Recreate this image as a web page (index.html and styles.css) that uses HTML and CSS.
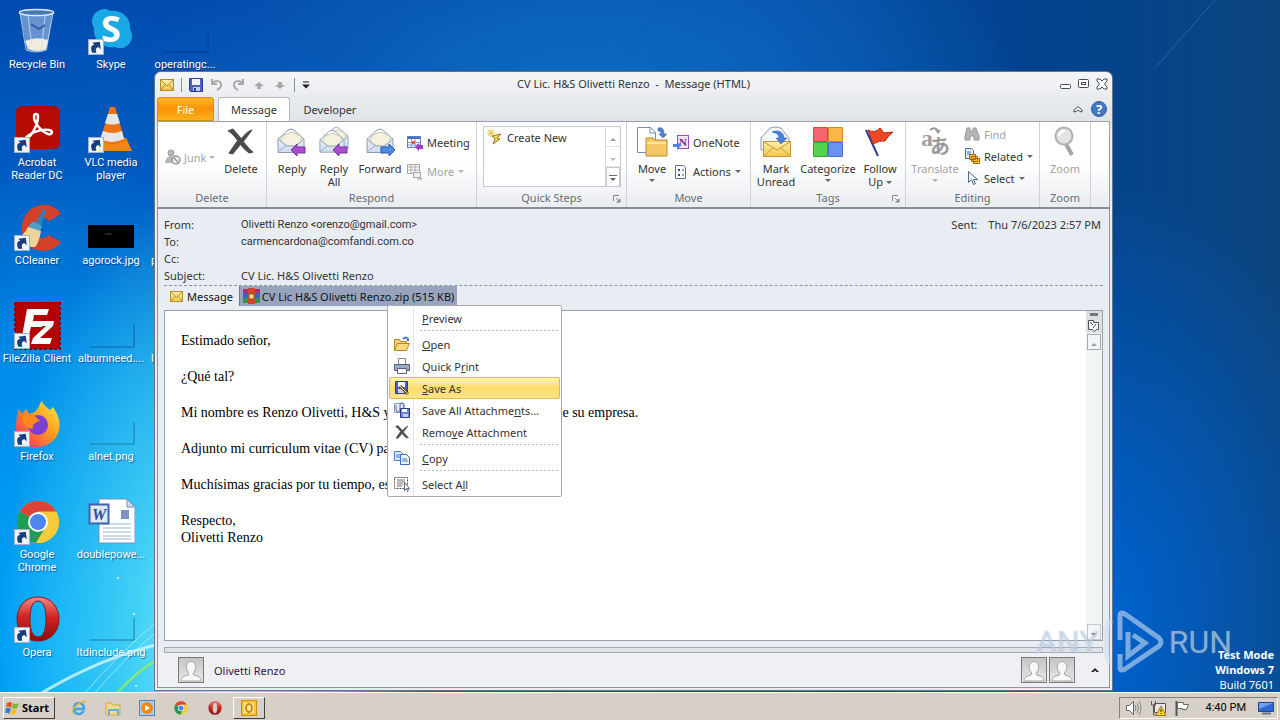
FILE: index.html
```
<!DOCTYPE html>
<html lang="en">
<head>
    <meta charset="UTF-8">
    <meta name="viewport" content="width=device-width, initial-scale=1.0">
    <title>CV Lic. H&amp;S Olivetti Renzo - Message (HTML)</title>
    <link rel="stylesheet" href="styles.css">
</head>
<body>
    <!-- shared icons -->
    <svg class="defs" width="0" height="0">
        <defs>
            <linearGradient id="g-opera" x1="0" y1="0" x2="0" y2="1"><stop offset="0" stop-color="#f58a80"/><stop offset=".45" stop-color="#cf2424"/><stop offset="1" stop-color="#8d0c0c"/></linearGradient>
            <linearGradient id="g-gold" x1="0" y1="0" x2="0" y2="1"><stop offset="0" stop-color="#fff0a8"/><stop offset="1" stop-color="#f3c548"/></linearGradient>
            <linearGradient id="g-env" x1="0" y1="0" x2="0" y2="1"><stop offset="0" stop-color="#ffffff"/><stop offset="1" stop-color="#cddcf0"/></linearGradient>
            <linearGradient id="g-person" x1="0" y1="0" x2="0" y2="1"><stop offset="0" stop-color="#c4c4c4"/><stop offset="1" stop-color="#e9e9e9"/></linearGradient>
            <linearGradient id="g-fox" x1="1" y1="0" x2="0" y2="1"><stop offset="0" stop-color="#fff24a"/><stop offset=".45" stop-color="#ff9a1f"/><stop offset="1" stop-color="#f5246b"/></linearGradient>
        </defs>
        <symbol id="shortcut" viewBox="0 0 15 15">
            <rect x=".5" y=".5" width="14" height="14" fill="#f3f6fa" stroke="#9fb4cc"/>
            <path d="M4 13C2 8 3 6 6 5.500L4 3.500l7-1 1 7-2.500-2C7 8.500 7 10.500 8 13z" fill="#173f80"/>
        </symbol>
        <symbol id="person" viewBox="0 0 26 26">
            <rect x=".5" y=".5" width="25" height="25" fill="url(#g-person)" stroke="#777"/>
            <path d="M3 24c0-4 3-5 6-5.500 2-.5 2-2 1-3.500-1.500-2-2-4-1.500-6.500C9 5.500 11 4.500 13 4.500s4 1 4.500 4c.5 2.500 0 4.500-1.500 6.500-1 1.500-1 3 1 3.500 3 .5 6 1.500 6 5.500z" fill="#f8f8f8" stroke="#a5a5a5"/>
        </symbol>
        <symbol id="mail" viewBox="0 0 14 12">
            <rect x=".5" y=".5" width="13" height="11" fill="url(#g-gold)" stroke="#b58b24"/>
            <path d="M1 1l6 6 6-6M1 11l4-5M13 11L9 6" fill="none" stroke="#b58b24"/>
        </symbol>
        <symbol id="open-env" viewBox="0 0 28 26">
            <path d="M1 11L11 2q3-2 6 0l10 9v13.500H1z" fill="url(#g-env)" stroke="#8a9cb5"/>
            <path d="M4 11l3-4 8-3 9 4v6l-6 4h-8l-6-4z" fill="#f4f1df" stroke="#c9c4a5"/>
            <path d="M1 11l9 7h8l9-7M1 24l9-7M27 24l-9-7" fill="none" stroke="#9aabc2"/>
        </symbol>
        <symbol id="cross" viewBox="0 0 28 28">
            <path d="M1 3l5-2c4 4 6 7 9 10 3-4 7-8 11-9l-9 12c3 4 6 8 10 11l-4 1c-4-3-7-6-9-9-3 4-6 7-8 10l-4-1c3-4 6-9 9-13C8 9 5 5 1 3z" fill="#4b4b4b" stroke="#4b4b4b"/>
        </symbol>
        <symbol id="chrome" viewBox="0 0 44 44">
            <circle cx="22" cy="22" r="21" fill="#f9cb3a"/>
            <path d="M22 22L3.800 11.500A21 21 0 0 1 40.200 11.500H22z" fill="#db4437"/>
            <path d="M22 22L3.800 11.500A21 21 0 0 0 20 43L29 28z" fill="#1e9c57"/>
            <path d="M22 12h18.500A21 21 0 0 1 20 43L30 27z" fill="#f9cb3a"/>
            <circle cx="22" cy="22" r="10" fill="#fff"/><circle cx="22" cy="22" r="8" fill="#4c86ee"/>
        </symbol>
        <symbol id="opera" viewBox="0 0 44 46">
            <path fill-rule="evenodd" d="M22 1C9 1 1 11 1 23s8 22 21 22 21-10 21-22S35 1 22 1zm0 4c6 0 8 8 8 18s-2 18-8 18-8-8-8-18 2-18 8-18z" fill="url(#g-opera)" stroke="#8e1616"/>
        </symbol>
    </svg>

    <main class="desktop">
        <svg class="rays" viewBox="0 0 160 200" aria-hidden="true">
            <path d="M40 202Q100 166 160 152" stroke="#d5f5ff" stroke-width="3" fill="none" opacity=".8"/>
            <path d="M84 202Q120 160 160 127M94 202Q125 165 160 137" stroke="#b8f0ff" fill="none" opacity=".7"/>
            <path d="M116 202Q138 178 160 166" stroke="#8ee86a" stroke-width="2" fill="none"/>
            <g fill="#dffaff"><circle cx="118" cy="86" r="1"/><circle cx="134" cy="122" r="1"/><circle cx="136" cy="194" r="1"/></g>
        </svg>
        <svg class="beam" viewBox="0 0 200 90" aria-hidden="true">
            <path d="M135 0L75 68" stroke="#3f78b5" opacity=".6"/>
        </svg>

        <div class="icons">
            <a class="icon" href="#">
                <svg viewBox="0 0 48 48"><path d="M7 4h33l-6 38q-9 4-20 0z" fill="#9db9dc" opacity=".65"/><path d="M12 33q11-5 23-1l-2 9q-8 4-18 0z" fill="#f0ece0"/><ellipse cx="23.500" cy="4.500" rx="17" ry="3" fill="#4777b5" stroke="#dbe8f5" stroke-width="1.500"/><path d="M7 5l6 37q9 4 20 0l7-37M15 8l4 30M32 8l-3 30" fill="none" stroke="#d0e0f2" opacity=".8"/><path d="M18 16l8 5 6-4" stroke="#2e5fae" stroke-width="2" fill="none"/></svg>
                <span>Recycle Bin</span>
            </a>
            <a class="icon" href="#">
                <svg viewBox="0 0 48 48"><path d="M13 2c4-2 8-1 10 1 12-2 21 7 20 18 3 5 3 12-2 16-4 4-9 4-13 2C17 41 6 33 7 20 3 14 5 5 13 2z" fill="#1ba9e6"/><text x="24" y="34" class="skype-s">S</text><use href="#shortcut" x="1" y="31" width="16" height="16"/></svg>
                <span>Skype</span>
            </a>
            <a class="icon" href="#">
                <svg viewBox="0 0 48 48"><path d="M3 44h44V22" fill="none" stroke="#0a3b8c"/></svg>
                <span>operatingc...</span>
            </a>

            <a class="icon" href="#">
                <svg viewBox="0 0 48 48"><rect x="3" y="0" width="44" height="43" rx="6" fill="#b30b00"/><path d="M12 33c4-6 15-10 24-9 5 1 3 5-1 4-6-2-14-11-14-17 0-4 4-4 4 0 0 6-5 17-10 21-2 2-4 2-3 1z" fill="none" stroke="#fff" stroke-width="2.500"/><use href="#shortcut" x="1" y="31" width="16" height="16"/></svg>
                <span>Acrobat<br>Reader DC</span>
            </a>
            <a class="icon" href="#">
                <svg viewBox="0 0 48 48"><path d="M11 32h28l6 13H7z" fill="#f28a12"/><path d="M23 1h5l10 34q-13 7-25 0z" fill="#ee7411"/><path d="M21 8h9l3 9q-8 3-15 0zM16 25q10 4 19 0l2 8q-12 6-24 0z" fill="#e6e6e6"/><use href="#shortcut" x="1" y="31" width="16" height="16"/></svg>
                <span>VLC media<br>player</span>
            </a>
            <i></i>

            <a class="icon" href="#">
                <svg viewBox="0 0 48 48"><path d="M48 10C40-3 22-1 14 9c-9 12-6 30 7 36 9 4 20 2 27-7l-12-7c-4 4-10 4-13 0-4-5-2-13 3-16 4-2 8-1 10 2z" fill="#d5402b"/><path d="M30 5l3 1-5 18-7-2z" fill="#2f7fb8"/><path d="M19 18q6 0 10 5l-2 4-12-4z" fill="#4ba0d0"/><path d="M15 23l13 4q-2 12-6 16Q8 44 2 35q9-3 13-12z" fill="#f0d29b"/><use href="#shortcut" x="1" y="31" width="16" height="16"/></svg>
                <span>CCleaner</span>
            </a>
            <a class="icon" href="#">
                <svg viewBox="0 0 48 48"><path d="M1 21h46v23H1z" fill="#000"/><path d="M18 30h7" stroke="#444"/></svg>
                <span>agorock.jpg</span>
            </a>
            <a class="icon clipped" href="#"><svg viewBox="0 0 48 48"></svg><span>p</span></a>

            <a class="icon" href="#">
                <svg viewBox="0 0 48 48"><path d="M2 0h45v47H2z" fill="#b30000" stroke="#7c0000" stroke-width="2" stroke-dasharray="3 2"/><path d="M14 7h22l-2 6H21l-1 6h11l-2 6H18l-4 15H8zM24 19h17l-1 5-13 12h12l-2 6H18l2-6 13-12h-10z" fill="#fff"/><use href="#shortcut" x="1" y="31" width="16" height="16"/></svg>
                <span>FileZilla Client</span>
            </a>
            <a class="icon" href="#">
                <svg viewBox="0 0 48 48"><path d="M3 45h44V22" fill="none" stroke="#0f62a5"/></svg>
                <span>albumneed....</span>
            </a>
            <a class="icon clipped" href="#"><svg viewBox="0 0 48 48"></svg><span>l</span></a>

            <a class="icon" href="#">
                <svg viewBox="0 0 48 48"><path d="M29 0c0 5 5 7 8 10l3-3c5 7 8 15 6 23-2 10-11 17-22 17S3 39 3 27c0-7 1-13 3-18l3 5 4-5 3 5c5-1 8-3 9-6z" fill="url(#g-fox)"/><circle cx="25" cy="25" r="10" fill="#7b3fd3"/><path d="M9 16l12-1 6 6c-5 1-8 4-7 8-7-1-11-6-11-13z" fill="#ff8a1a"/><use href="#shortcut" x="1" y="31" width="16" height="16"/></svg>
                <span>Firefox</span>
            </a>
            <a class="icon" href="#">
                <svg viewBox="0 0 48 48"><path d="M3 44h44V22" fill="none" stroke="#1c7f9e"/></svg>
                <span>alnet.png</span>
            </a>
            <i></i>

            <a class="icon" href="#">
                <svg viewBox="0 0 48 48"><use href="#chrome" x="3" y="2" width="44" height="44"/><use href="#shortcut" x="1" y="31" width="16" height="16"/></svg>
                <span>Google<br>Chrome</span>
            </a>
            <a class="icon" href="#">
                <svg viewBox="0 0 48 48"><path d="M12 1h28l8 8v36H12z" fill="#fff" stroke="#6f8fbf"/><path d="M40 1v8h8z" fill="#cfdcf0" stroke="#6f8fbf"/><path d="M16 26h28M16 30h28M16 34h28M16 38h28M16 41h28" stroke="#9db2d8"/><path d="M34 12h8v9h-8z" fill="#7e93c4"/><rect x="2.500" y="6.500" width="19" height="19" fill="#dce8f8" stroke="#3f62a8" stroke-width="2"/><text x="12" y="22" class="word-w">W</text></svg>
                <span>doublepowe...</span>
            </a>
            <i></i>

            <a class="icon" href="#">
                <svg viewBox="0 0 48 48"><use href="#opera" x="3" y="0" width="44" height="46"/><use href="#shortcut" x="1" y="31" width="16" height="16"/></svg>
                <span>Opera</span>
            </a>
            <a class="icon" href="#">
                <svg viewBox="0 0 48 48"><path d="M3 44h44V22" fill="none" stroke="#1c7f9e"/></svg>
                <span>ltdinclude.png</span>
            </a>
        </div>

        <section class="window">
            <header class="titlebar">
                <div class="quick-access">
                    <svg width="14" height="12"><use href="#mail"/></svg>
                    <i class="divider"></i>
                    <button aria-label="Save"><svg width="14" height="14"><path d="M.5.500h13v13h-12l-1-1z" fill="#4d62c4" stroke="#2c3a8c"/><path d="M3 1h8v6H3z" fill="#f1f4fb"/><path d="M4 9h7v4H4z" fill="#c6d0ee"/><path d="M5 10h2v3H5z" fill="#2c3a8c"/></svg></button>
                    <button aria-label="Undo"><svg width="14" height="14"><path d="M2 1v5h5M2 6c3-4 9-4 9 1 0 3-2 4-4 5" fill="none" stroke="#a9a9a9" stroke-width="2"/></svg></button>
                    <button aria-label="Redo"><svg width="14" height="14"><path d="M12 1v5H7M12 6C9 2 3 2 3 7c0 3 2 4 4 5" fill="none" stroke="#a9a9a9" stroke-width="2"/></svg></button>
                    <button aria-label="Previous item"><svg width="14" height="14"><path d="M7 4l5 4H9v3H5V8H2z" fill="#a9a9a9"/></svg></button>
                    <button aria-label="Next item"><svg width="14" height="14"><path d="M7 11l5-4H9V4H5v3H2z" fill="#a9a9a9"/></svg></button>
                    <i class="divider"></i>
                    <button aria-label="Customize"><svg width="8" height="8"><path d="M1 1h6" stroke="#222"/><path d="M0 3.500h8L4 7.500z" fill="#222"/></svg></button>
                </div>
                <h1>CV Lic. H&amp;S Olivetti Renzo&nbsp; -&nbsp; Message (HTML)</h1>
                <div class="controls">
                    <button aria-label="Minimize"><svg width="12" height="12"><rect x=".5" y="6.500" width="10" height="4" rx="1" fill="#fff" stroke="#444b55"/></svg></button>
                    <button aria-label="Restore"><svg width="12" height="12"><rect x=".5" y="1.500" width="10" height="8" rx="1" fill="#fff" stroke="#444b55"/><rect x="3.500" y="4.500" width="4" height="2" fill="none" stroke="#444b55"/></svg></button>
                    <button aria-label="Close"><svg width="12" height="12"><path d="M1 1h3l2 2 2-2h3v2L8.500 6 11 9v2H8L6 9l-2 2H1V9l2.500-3L1 3z" fill="#fff" stroke="#444b55"/></svg></button>
                </div>
            </header>

            <nav class="tabs">
                <button class="tab file">File</button>
                <button class="tab active">Message</button>
                <button class="tab">Developer</button>
                <div class="help">
                    <button aria-label="Minimize the ribbon"><svg width="10" height="8"><path d="M5 1.500L9 5v2L7 6.500 5 5 3 6.500 1 7V5z" fill="#fff" stroke="#444b55"/></svg></button>
                    <button aria-label="Help"><svg width="16" height="16"><circle cx="8" cy="8" r="7.500" fill="#4478cc" stroke="#2f5ba5"/><text x="8" y="12.500" class="help-mark">?</text></svg></button>
                </div>
            </nav>

            <div class="ribbon">
                <div class="group">
                    <div class="tools">
                        <div class="stack">
                            <button class="small junk disabled"><svg width="16" height="16"><circle cx="6" cy="4" r="3" fill="#bbb" stroke="#999"/><path d="M0 14q1-7 6-7 4 1 4 7z" fill="#b5b5b5"/><circle cx="11" cy="11" r="4" fill="#eee" stroke="#999" stroke-width="1.500"/><path d="M8.500 8.500l5 5" stroke="#999" stroke-width="1.500"/></svg>Junk<b class="caret"></b></button>
                        </div>
                        <button class="big"><svg viewBox="0 0 32 32"><use href="#cross" x="1" y="2" width="29" height="27"/></svg>Delete</button>
                    </div>
                    <div class="group-name">Delete</div>
                </div>
                <div class="group respond">
                    <div class="tools">
                        <button class="big"><svg viewBox="0 0 32 32"><use href="#open-env" x="1" y="2" width="28" height="26"/><path d="M15 24l6-6v3h8v6h-8v3z" fill="#a94fce" stroke="#7c2da0"/></svg>Reply</button>
                        <button class="big"><svg viewBox="0 0 32 32"><use href="#open-env" x="6" y="0" width="25" height="24"/><use href="#open-env" x="1" y="3" width="26" height="25"/><path d="M15 24l6-6v3h8v6h-8v3z" fill="#a94fce" stroke="#7c2da0"/></svg>Reply<br>All</button>
                        <button class="big mid"><svg viewBox="0 0 32 32"><use href="#open-env" x="2" y="2" width="28" height="26"/><path d="M31 24l-6-6v3h-8v6h8v3z" fill="#4f8de0" stroke="#2459b0"/></svg>Forward</button>
                        <div class="stack">
                            <button class="small"><svg width="16" height="16"><rect x=".5" y="1.500" width="13" height="11" fill="#fff" stroke="#5f7fc0"/><path d="M1 3h12" stroke="#4a6cc0" stroke-width="2"/><path d="M1 7.500h12M1 10h12M4.500 4v8M8 4v8" stroke="#7f9ad4"/><path d="M5 6h3v3H5z" fill="#e05a3a"/><path d="M8 12l4-4v2h4v4h-4v2z" fill="#a03fc4"/></svg>Meeting</button>
                            <button class="small disabled"><svg width="16" height="16"><path d="M.5.500h12v9H.5zM1 3h11M1 6h11M4 1v8M8 1v8" fill="none" stroke="#aaa"/><rect x="6.500" y="8.500" width="7" height="5" fill="#eee" stroke="#aaa"/><path d="M10 15h5M13 13l2 2" stroke="#999"/></svg>More<b class="caret"></b></button>
                        </div>
                    </div>
                    <div class="group-name">Respond</div>
                </div>
                <div class="group quick-steps">
                    <div class="tools">
                        <div class="gallery">
                            <button class="small"><svg width="16" height="16"><path d="M4 0v8M0 4h8M1 1l6 6M7 1L1 7" stroke="#e8c33a"/><path d="M5 7l9-2-4 4 3 1-7 5 2-5z" fill="#f5d04e" stroke="#9a7b2a"/></svg>Create New</button>
                            <div class="spinner">
                                <button aria-label="Up"><b class="up"></b></button>
                                <button aria-label="Down"><b class="caret"></b></button>
                                <button aria-label="More steps"><b class="caret lined"></b></button>
                            </div>
                        </div>
                    </div>
                    <div class="group-name">Quick Steps<svg class="launcher" width="8" height="8"><path d="M.5 6V.500H6M3 3l3 3" fill="none" stroke="#888"/><path d="M7.500 3v4.500H3z" fill="#888"/></svg></div>
                </div>
                <div class="group move">
                    <div class="tools">
                        <button class="big"><svg viewBox="0 0 32 32"><path d="M1.500 1.500h13l5 5v20h-18z" fill="#fff" stroke="#7a8fb5"/><path d="M14 1v6h6" fill="none" stroke="#7a8fb5"/><path d="M22 2c5-1 6 2 6 6h3l-4 4-4-4h2c0-2-1-3-3-3z" fill="#4f83d4" stroke="#2b5ba8" stroke-width=".5"/><path d="M10 12h7l2 2h12v16H10z" fill="#f5c765" stroke="#bd8a2d"/><path d="M11 17h19" stroke="#ffe5a6" stroke-width="2"/></svg>Move<b class="caret"></b></button>
                        <div class="stack">
                            <button class="small"><svg width="16" height="16"><rect x="4.500" y=".5" width="11" height="13" fill="#f6e6f8" stroke="#9b4fa8"/><text x="10" y="11" class="onenote">N</text><path d="M0 9h4V6l4 4.500L4 15v-3H0z" fill="#4b84d8"/></svg>OneNote</button>
                            <button class="small"><svg width="16" height="16"><path d="M2.500 1.500h8l2 2v11h-10z" fill="#fff" stroke="#5b6f96"/><path d="M5 5h2v2H5zM5 10h2v2H5z" fill="#2f4a80"/><path d="M9 6h2M9 11h2" stroke="#2f4a80"/></svg>Actions<b class="caret"></b></button>
                        </div>
                    </div>
                    <div class="group-name">Move</div>
                </div>
                <div class="group">
                    <div class="tools">
                        <button class="big"><svg viewBox="0 0 32 32"><path d="M1 12l9-10q5-2 11 0l8 10v12H1z" fill="#f2f7fc" stroke="#8a9cb5"/><rect x="3.500" y="15.500" width="27" height="15" fill="url(#g-gold)" stroke="#c79a35"/><path d="M4 16l13 8 13-8M4 30l9-8M30 30l-9-8" fill="none" stroke="#c79a35"/><path d="M12 6c7-3 12 1 12 6h3l-6 6-5-6h3c0-3-2-5-7-6z" fill="#4a7fd8" stroke="#2454a8" stroke-width=".5"/></svg>Mark<br>Unread</button>
                        <button class="big wide"><svg viewBox="0 0 32 32"><path d="M1.500 1.500h14v14h-14z" fill="#f5656c" stroke="#c9474e"/><path d="M16.500 1.500h14v14h-14z" fill="#fbb54a" stroke="#cf8b2c"/><path d="M1.500 16.500h14v14h-14z" fill="#55d24f" stroke="#35a336"/><path d="M16.500 16.500h14v14h-14z" fill="#6a93f0" stroke="#466fc9"/></svg>Categorize<b class="caret"></b></button>
                        <button class="big"><svg viewBox="0 0 32 32"><path d="M2 4l12 26" stroke="#2c3f9e" stroke-width="2"/><path d="M4 4q7 4 12-2l4 5 9-1q-5 4-8 9-5-1-12 3z" fill="#ea4a26" stroke="#b3260f"/></svg><span>Follow<br>Up <b class="caret"></b></span></button>
                    </div>
                    <div class="group-name">Tags<svg class="launcher" width="8" height="8"><path d="M.5 6V.500H6M3 3l3 3" fill="none" stroke="#888"/><path d="M7.500 3v4.500H3z" fill="#888"/></svg></div>
                </div>
                <div class="group editing">
                    <div class="tools">
                        <button class="big mid disabled"><svg viewBox="0 0 32 32"><text x="8" y="20" class="glyph-a">a</text><text x="21" y="28" class="glyph-jp">あ</text><path d="M11 4q5-4 8 1" fill="none" stroke="#999" stroke-width="2"/><path d="M16 4h6l-3 4z" fill="#999"/></svg>Translate<b class="caret"></b></button>
                        <div class="stack three">
                            <button class="small disabled"><svg width="16" height="16"><path d="M3 2h3v3h3V2h3l3 8v4h-5v-4H6v4H1v-4z" fill="#b5b5b5" stroke="#999"/></svg>Find</button>
                            <button class="small"><svg width="16" height="16"><path d="M1.500.500h6l2 2v8h-8z" fill="#e6effc" stroke="#4a6aa5"/><path d="M3 4h4M3 6h4" stroke="#4a6aa5"/><path d="M5.500 6.500h6v5h-6zM7.500 8.500h6v5h-6zM9.500 10.500h6v5h-6z" fill="#f9c23c" stroke="#a8690f"/></svg>Related<b class="caret"></b></button>
                            <button class="small"><svg width="16" height="16"><path d="M4.500 1.500v11l3-3 2 5 2-1-2-4h4z" fill="#eef4ff" stroke="#55698c"/></svg>Select<b class="caret"></b></button>
                        </div>
                    </div>
                    <div class="group-name">Editing</div>
                </div>
                <div class="group">
                    <div class="tools">
                        <button class="big disabled"><svg viewBox="0 0 32 32"><path d="M17 18l6 11" stroke="#a5a5a5" stroke-width="4"/><circle cx="15" cy="10" r="8.500" fill="#e4e4e4" stroke="#b0b0b0" stroke-width="2"/><path d="M10 10q1-5 6-5" stroke="#fff" stroke-width="2" fill="none"/></svg>Zoom</button>
                    </div>
                    <div class="group-name">Zoom</div>
                </div>
            </div>

            <div class="message">
                <div class="meta">
                    <dl>
                        <dt>From:</dt><dd class="address">Olivetti Renzo &lt;orenzo@gmail.com&gt;</dd>
                        <dt>To:</dt><dd class="address">carmencardona@comfandi.com.co</dd>
                        <dt>Cc:</dt><dd></dd>
                        <dt>Subject:</dt><dd>CV Lic. H&amp;S Olivetti Renzo</dd>
                    </dl>
                    <p class="sent"><span>Sent:</span><span>Thu 7/6/2023 2:57 PM</span></p>
                </div>

                <div class="attachments">
                    <button class="attach"><svg width="13" height="11"><use href="#mail"/></svg>Message</button>
                    <button class="attach selected"><svg width="17" height="16"><path d="M0 1h17v4H0z" fill="#b0306a"/><path d="M0 5h17v5H0z" fill="#3565c8"/><path d="M0 10h17v5H0z" fill="#2f9a45"/><path d="M5 0h7v16H5z" fill="#d2442c"/><path d="M6 6h5v5H6z" fill="#f3d9a0" stroke="#8a5a1a"/></svg>CV Lic H&amp;S Olivetti Renzo.zip (515 KB)</button>

                    <div class="menu">
                        <button><i></i><span><u>P</u>review</span></button>
                        <hr>
                        <button><i><svg width="16" height="16"><path d="M.5 14.500v-11h5l1 2h6v3" fill="#f5cf70" stroke="#b5852a"/><path d="M.5 14.500l3-7h12l-3 7z" fill="#fbd97e" stroke="#b5852a"/><path d="M9 3q3-3 5 0v2" fill="none" stroke="#4a7fc8" stroke-width="2"/></svg></i><span><u>O</u>pen</span></button>
                        <button><i><svg width="16" height="16"><path d="M4.500.500h7v6h-7z" fill="#fff" stroke="#7b8aa5"/><path d="M.5 6.500h15v6H.5z" fill="#9aa9c4" stroke="#55627d"/><path d="M3.500 10.500h9v5h-9z" fill="#fff" stroke="#55627d"/></svg></i><span>Quick P<u>r</u>int</span></button>
                        <button class="hover"><i><svg width="16" height="16"><path d="M1.500 1.500h12v12h-12z" fill="#4d62c4" stroke="#2c3a8c"/><path d="M4 2h7v5H4z" fill="#f1f4fb"/><path d="M4 9h6v4H4z" fill="#c6d0ee"/><path d="M6 6l8 8" stroke="#705028" stroke-width="3"/><path d="M6 6l8 8" stroke="#f3d28a"/></svg></i><span><u>S</u>ave As</span></button>
                        <button><i><svg width="16" height="16"><path d="M.5 1.500h9v9h-9z" fill="#e8effb" stroke="#8a9cc4"/><path d="M2 3v4q0 3 2 3t2-3V3q0-2 2-2t2 2v4" fill="none" stroke="#4d64a5"/><path d="M6.500 6.500h9v9h-9z" fill="#6f84d8" stroke="#2c3a8c"/><path d="M8 7h5v3H8z" fill="#fff"/><path d="M9 12h5v3H9z" fill="#c6d0ee"/></svg></i><span>Save All Attachme<u>n</u>ts...</span></button>
                        <button><i><svg width="14" height="14"><use href="#cross"/></svg></i><span>Remo<u>v</u>e Attachment</span></button>
                        <hr>
                        <button><i><svg width="16" height="16"><path d="M.5 1.500h6l2 2v7h-8z" fill="#dcebfc" stroke="#4a7fc0"/><path d="M6.500 4.500h6l3 3v7h-9z" fill="#eaf3ff" stroke="#3a6db5"/><path d="M2 5h4M2 7h4M8 9h5M8 11h6" stroke="#4a7fc0"/></svg></i><span><u>C</u>opy</span></button>
                        <hr>
                        <button><i><svg width="16" height="16"><path d="M.5 1.500h13v11H.5z" fill="none" stroke="#555" stroke-dasharray="2 1"/><path d="M3 4h8M3 6h8M3 8h6M3 10h5" stroke="#777"/><path d="M10.500 6.500v8l2-2 1 3 1-1-1-2h2z" fill="#fff" stroke="#55698c"/></svg></i><span>Select A<u>l</u>l</span></button>
                    </div>
                </div>

                <div class="sheet">
                    <article lang="es">
                        <p>Estimado señor,</p>
                        <p>¿Qué tal?</p>
                        <p>Mi nombre es Renzo Olivetti, H&amp;S y me gustaría mucho ser parte de su empresa.</p>
                        <p>Adjunto mi curriculum vitae (CV) para ello.</p>
                        <p>Muchísimas gracias por tu tiempo, espero.</p>
                        <p>Respecto,<br>Olivetti Renzo</p>
                    </article>
                    <div class="scrollbar">
                        <i class="split"></i>
                        <svg width="14" height="14"><path d="M1.500 1.500h5v2h5v7h-2l-2 2-2-2h-4z" fill="#f3f4f6" stroke="#555"/><path d="M3 3l3 3M9 5l-3 4" stroke="#555"/></svg>
                        <button aria-label="Scroll up"><b class="up"></b></button>
                        <button class="down" aria-label="Scroll down"><b class="caret"></b></button>
                    </div>
                </div>

                <div class="splitter"></div>
                <footer class="people">
                    <svg width="26" height="26"><use href="#person"/></svg>
                    <span class="who">Olivetti Renzo</span>
                    <svg width="26" height="26"><use href="#person"/></svg>
                    <svg width="26" height="26"><use href="#person"/></svg>
                    <button aria-label="Expand people pane"><svg width="8" height="6"><path d="M0 5l4-4 4 4H5.500L4 3.500 2.500 5z" fill="#222"/></svg></button>
                </footer>
            </div>
        </section>

        <div class="watermark">
            <span>ANY</span>
            <svg width="60" height="64" viewBox="0 0 60 64"><path d="M8 10Q3 12 3 18v27q0 6 4 8M16 44v13q0 5 5 2l34-23q4-4 0-8L21 4q-5-3-5 2v24M24 22v24l17-13-12-8" fill="none" stroke="currentColor" stroke-width="5"/></svg>
            <span>RUN</span>
        </div>
        <p class="build"><b>Test Mode</b><b>Windows 7</b><span>Build 7601</span></p>
    </main>

    <footer class="taskbar">
        <button class="start"><svg width="15" height="14"><path d="M2 2q3-2 5 0L6 7Q4 5 1 6z" fill="#e8541f"/><path d="M8 2q3 2 6 0l-2 5q-2 1-5 0z" fill="#74b82d"/><path d="M1 7q3-1 5 1l-2 5q-2-2-4-1z" fill="#2f7fd6"/><path d="M7 8q3 1 5 0l-2 5q-2 1-5 0z" fill="#f6bd1b"/></svg>Start</button>
        <button class="task" aria-label="Internet Explorer"><svg viewBox="0 0 16 16"><path d="M12.500 11Q11 14 8 14 3 14 3 8.500T8 3q5 0 5 6H4" fill="none" stroke="#3da5e4" stroke-width="2.500"/><path d="M2 14Q-1 12 5 6T15 2" fill="none" stroke="#e9b93a" stroke-width="1.500"/></svg></button>
        <button class="task" aria-label="Explorer"><svg viewBox="0 0 16 16"><path d="M1 3h6l1 2h7v10H1z" fill="#f5d987" stroke="#d2a948"/><path d="M4 15v-5h9v5" fill="none" stroke="#5ab4e0" stroke-width="2"/></svg></button>
        <button class="task" aria-label="Media Player"><svg viewBox="0 0 16 16"><rect x=".5" y=".5" width="15" height="15" fill="#a9cdec" stroke="#4d87b8"/><circle cx="8" cy="8" r="6" fill="#f28a1a"/><path d="M6 5l5 3-5 3z" fill="#fff"/></svg></button>
        <button class="task" aria-label="Chrome"><svg viewBox="0 0 16 16"><use href="#chrome" x="1" y="1" width="14" height="14"/></svg></button>
        <button class="task" aria-label="Opera"><svg viewBox="0 0 16 16"><use href="#opera" x="1" y="1" width="14" height="14"/></svg></button>
        <button class="task running" aria-label="Outlook"><svg viewBox="0 0 16 16"><rect x=".5" y=".5" width="15" height="15" fill="#fbc531" stroke="#c98e14"/><path d="M3 3h10v10H3z" fill="#fde9a6"/><ellipse cx="8" cy="8" rx="3" ry="4" fill="none" stroke="#d08a0c" stroke-width="2"/></svg></button>
        <div class="tray">
            <svg width="16" height="16"><path d="M.5 5.500h3l4-4v13l-4-4h-3z" fill="#fff" stroke="#666"/><path d="M9 5q2 3 0 6M11 3q3 5 0 10M13 1q4 7 0 14" fill="none" stroke="#888"/></svg>
            <svg width="16" height="16"><path d="M4.500 3.500h11v9h-11z" fill="#e8e8e8" stroke="#555"/><path d="M1.500 1v4h4V1M3.500 5v10h3" fill="none" stroke="#555"/><path d="M11 6l5 9.500H6z" fill="#ffd52a" stroke="#a07a00"/><path d="M11 9v3M11 13v1" stroke="#222"/></svg>
            <svg width="16" height="16"><path d="M2.500 1v15" stroke="#555" stroke-width="2"/><path d="M3.500 2.500h6v2h5l-2 5h-4v-1h-5z" fill="#fff" stroke="#666"/></svg>
            <time>4:40 PM</time>
            <svg width="16" height="14"><path d="M.5 1.500h15v9H.5z" fill="#2b6ad0" stroke="#1d478f"/><path d="M1 2h14L1 8z" fill="#6fa2ea"/><path d="M4 12.500h9" stroke="#69788f" stroke-width="2"/></svg>
        </div>
    </footer>
</body>
</html>
```
FILE: styles.css
```
* {
    box-sizing: border-box;
}

body {
    margin: 0;
    height: 100vh;
    display: flex;
    flex-direction: column;
    overflow: hidden;
    font-family: "Noto Sans", sans-serif;
    font-size: 11px;
    line-height: 13px;
    color: #333;
}

button {
    font: inherit;
    color: inherit;
    background: none;
    border: none;
    padding: 0;
}

svg {
    display: block;
    flex: none;
}

p, h1, dl, dd {
    margin: 0;
}

.defs {
    position: absolute;
}

/* desktop */
.desktop {
    flex: 1;
    min-height: 0;
    position: relative;
    background:
        radial-gradient(ellipse 220px 460px at 220px 640px, #8bf0f5 0%, rgba(80, 220, 245, 0.8) 40%, rgba(0, 170, 245, 0) 100%),
        radial-gradient(ellipse 520px 700px at 60px 650px, #00a4fa 0%, rgba(0, 155, 245, 0.85) 40%, rgba(0, 120, 225, 0.4) 70%, rgba(0, 90, 200, 0) 100%),
        radial-gradient(ellipse 440px 200px at 580px 90px, #0e6cc2 0%, rgba(14, 100, 190, 0) 100%),
        radial-gradient(ellipse 260px 440px at 1100px 620px, #0064d0 0%, rgba(0, 94, 200, 0) 100%),
        linear-gradient(90deg, #0047ab 0%, #0650ae 60%, #02438f 80%, #0c4580 100%);
}

.rays {
    position: absolute;
    left: 0;
    bottom: 0;
    width: 160px;
}

.beam {
    position: absolute;
    right: 0;
    top: 0;
    width: 200px;
}

.icons {
    display: grid;
    grid-template-columns: repeat(3, 74px);
    grid-auto-rows: 98px;
    padding-top: 8px;
    font-family: Roboto, sans-serif;
}

.icon {
    display: flex;
    flex-direction: column;
    align-items: center;
    gap: 2px;
    color: #fff;
    text-align: center;
    text-decoration: none;
    text-shadow: 1px 1px 1px rgba(0, 30, 90, 0.6);
    white-space: nowrap;
}

.icon svg {
    width: 48px;
    height: 48px;
    text-shadow: none;
}

.clipped {
    align-items: flex-start;
    padding-left: 3px;
}

.skype-s {
    font: bold 36px "Noto Sans", sans-serif;
    fill: #fff;
    text-anchor: middle;
}

.word-w {
    font: italic bold 16px "Liberation Serif", serif;
    fill: #2b4d96;
    text-anchor: middle;
}

/* message window */
.window {
    position: absolute;
    left: 154px;
    right: 167px;
    top: 71px;
    bottom: 1px;
    display: flex;
    flex-direction: column;
    padding: 0 2px 2px;
    border: 1px solid #6b7485;
    border-radius: 7px 7px 0 0;
    background: linear-gradient(#f4f5f7, #dfe3e7 50px, #e9edf2 60px);
}

.titlebar {
    display: grid;
    grid-template-columns: 1fr auto 1fr;
    align-items: center;
    height: 25px;
    padding-bottom: 2px;
}

.titlebar h1 {
    font-size: 11px;
    font-weight: normal;
}

.quick-access {
    display: flex;
    align-items: center;
    gap: 7px;
    padding: 2px 0 0 3px;
}

.divider {
    width: 1px;
    height: 14px;
    background: #8c929b;
}

.controls {
    display: flex;
    justify-content: flex-end;
    gap: 6px;
    padding-right: 2px;
}

.tabs {
    display: flex;
    align-items: flex-end;
    height: 24px;
}

.tab {
    width: 80px;
    height: 24px;
    font-size: 11px;
}

.tab.file {
    width: 57px;
    margin-right: 4px;
    color: #fff;
    background: linear-gradient(#ffb62b, #f99204 50%, #ffb21c);
    border: 1px solid #d98a10;
    border-radius: 3px 3px 0 0;
}

.tab.active {
    position: relative;
    width: 72px;
    background: #fff;
    border: 1px solid #b5bac2;
    border-bottom: none;
    border-radius: 3px 3px 0 0;
}

.help {
    display: flex;
    align-items: center;
    gap: 8px;
    margin-left: auto;
    padding: 0 3px 4px 0;
}

.help-mark {
    font: bold 13px "Noto Sans", sans-serif;
    fill: #fff;
    text-anchor: middle;
}

.ribbon {
    display: flex;
    height: 88px;
    border: 1px solid #9aa0a9;
    border-bottom: 2px solid #888e98;
    background: linear-gradient(#fff 50%, #e9ecf0);
}

.group {
    display: flex;
    flex-direction: column;
    padding: 0 4px;
    border-right: 1px solid #cfd3d9;
}

.tools {
    flex: 1;
    display: flex;
}

.group-name {
    position: relative;
    padding-bottom: 3px;
    text-align: center;
    color: #666d78;
}

.launcher {
    position: absolute;
    right: 1px;
    top: 4px;
}

.big {
    display: flex;
    flex-direction: column;
    align-items: center;
    width: 42px;
    padding-top: 4px;
    white-space: nowrap;
}

.big svg {
    width: 32px;
    height: 32px;
    margin-bottom: 4px;
}

.big.mid {
    width: 50px;
}

.big.wide {
    width: 62px;
}

.big > .caret {
    margin-top: 4px;
}

.disabled {
    color: #a3a3a3;
}

.caret {
    display: inline-block;
    width: 0;
    border: 3px solid transparent;
    border-top-color: #666;
    border-bottom: none;
}

.big span .caret {
    vertical-align: 2px;
}

.disabled .caret {
    border-top-color: #b5b5b5;
}

.up {
    display: inline-block;
    width: 0;
    border: 3px solid transparent;
    border-bottom-color: #9a9fa8;
    border-top: none;
}

.lined {
    position: relative;
}

.lined::before {
    content: "";
    position: absolute;
    left: -4px;
    top: -6px;
    width: 8px;
    height: 1px;
    background: #666;
}

.stack {
    display: flex;
    flex-direction: column;
    padding-top: 6px;
}

.small {
    display: flex;
    align-items: center;
    gap: 4px;
    height: 29px;
    white-space: nowrap;
}

.junk {
    width: 58px;
    padding-left: 3px;
    height: 58px;
    gap: 3px;
}

.three {
    padding: 1px 0 0 4px;
}

.three .small {
    height: 22px;
}

.respond {
    width: 210px;
}

.respond .stack {
    padding-left: 2px;
}

.quick-steps {
    width: 150px;
}

.gallery {
    display: flex;
    justify-content: space-between;
    align-items: flex-start;
    width: 138px;
    height: 61px;
    margin: 4px 0 0 2px;
    background: #fff;
    border: 1px solid #c5cad2;
}

.gallery .small {
    height: 20px;
    padding-left: 3px;
}

.spinner {
    display: flex;
    flex-direction: column;
    width: 15px;
    border-left: 1px solid #d5d9df;
}

.spinner button {
    height: 20px;
    line-height: 8px;
    border-bottom: 1px solid #e0e3e8;
}

.spinner button:last-child {
    border: 1px solid #c5cad2;
}

.spinner button:not(:last-child) .caret {
    border-top-color: #b5b9c0;
}

.move {
    width: 124px;
}

.editing {
    width: 134px;
}

.onenote {
    font: bold 11px "Liberation Serif", serif;
    fill: #7d2a8c;
    text-anchor: middle;
}

.glyph-a {
    font: bold 24px "Liberation Serif", serif;
    fill: #a0a0a0;
    text-anchor: middle;
}

.glyph-jp {
    font: bold 20px "Noto Sans CJK JP", sans-serif;
    fill: #999;
    text-anchor: middle;
}

/* header, attachments and body */
.message {
    flex: 1;
    display: flex;
    flex-direction: column;
    padding: 6px 6px 0;
    border: 1px solid #8d93a0;
    border-top: none;
    background: #e8ecf3;
}

.meta {
    display: flex;
    justify-content: space-between;
    height: 71px;
    padding-top: 1px;
    border-bottom: 1px dashed #8d93a0;
    line-height: 17px;
}

.meta dl {
    display: grid;
    grid-template-columns: 77px auto;
    grid-auto-rows: 17px;
}

.address {
    font-family: Roboto, sans-serif;
}

.sent {
    display: flex;
    gap: 11px;
    padding-right: 2px;
}

.attachments {
    position: relative;
    display: flex;
    height: 24px;
    color: #111;
}

.attach {
    display: flex;
    align-items: center;
    gap: 4px;
    height: 20px;
    padding: 0 6px;
    white-space: nowrap;
}

.selected {
    gap: 2px;
    padding: 0 3px;
    border-left: 1px solid #777;
    background: #98a4be;
}

.menu {
    position: absolute;
    z-index: 1;
    left: 223px;
    top: 19px;
    width: 175px;
    padding: 1px;
    color: #333;
    background: linear-gradient(90deg, #fff 25px, #e2e4e7 25px, #e2e4e7 26px, #fff 26px);
    border: 1px solid #a7abb0;
    border-radius: 2px;
}

.menu button {
    display: flex;
    align-items: center;
    width: 100%;
    height: 22px;
    border: 1px solid transparent;
    border-radius: 2px;
}

.menu i {
    display: flex;
    justify-content: center;
    width: 23px;
    margin-right: 9px;
}

.menu .hover {
    border-color: #e9b84a;
    background: linear-gradient(#fff2b5, #fbdc6b 50%, #ffe48a);
}

.menu hr {
    height: 4px;
    margin: 0 0 0 31px;
    border: none;
    background: linear-gradient(#fff, #fff) 0 0 / 100% 1px no-repeat, repeating-linear-gradient(90deg, #bbb 0 2px, #fff 2px 4px) 0 1px / 100% 1px no-repeat;
}

.sheet {
    flex: 1;
    display: flex;
    justify-content: space-between;
    background: #fff;
    border: 1px solid #9aa0a9;
}

.sheet article {
    padding: 21px 16px;
    font-family: "Liberation Serif", serif;
    font-size: 14px;
    line-height: 17px;
    color: #000;
}

.sheet article p {
    margin-bottom: 19px;
}

.scrollbar {
    display: flex;
    flex-direction: column;
    align-items: center;
    gap: 1px;
    width: 16px;
    background: linear-gradient(#dcdfe4 22px, #f3f4f5 22px);
}

.split {
    width: 8px;
    height: 3px;
    margin: 2px 0;
    background: #777;
}

.scrollbar button {
    width: 14px;
    height: 16px;
    line-height: 10px;
    background: #f3f5f8;
    border: 1px solid #a5abb5;
}

.scrollbar .down {
    margin-top: auto;
    border-color: #c5c9cf;
}

.splitter {
    height: 6px;
    margin: 6px 0 0;
    border: 1px solid #a5abb5;
    background: #dfe2e7;
}

.people {
    display: flex;
    align-items: center;
    gap: 2px;
    height: 34px;
    margin: 0 -6px;
    padding: 0 10px 0 20px;
    background: #eef0f4;
}

.who {
    margin-left: 8px;
    margin-right: auto;
    font-size: 11px;
    color: #3a1038;
}

.people button {
    margin-left: 14px;
}

/* overlays on the wallpaper */
.watermark {
    position: absolute;
    right: 48px;
    bottom: 18px;
    display: flex;
    align-items: center;
    gap: 5px;
    font-family: Roboto, sans-serif;
    font-size: 32px;
    line-height: 64px;
    color: rgba(205, 220, 240, 0.6);
    text-shadow: 0 0 2px rgba(120, 140, 170, 0.4);
}

.build {
    position: absolute;
    right: 6px;
    bottom: 0;
    display: flex;
    flex-direction: column;
    align-items: flex-end;
    line-height: 15px;
    color: #fff;
}

/* taskbar */
.taskbar {
    display: flex;
    align-items: center;
    gap: 2px;
    height: 28px;
    padding: 2px 2px 0 3px;
    color: #000;
    background: #d6d0c8;
    border-top: 1px solid #fff;
}

.start {
    display: flex;
    align-items: center;
    gap: 2px;
    width: 52px;
    height: 22px;
    margin-right: 6px;
    padding: 0 1px;
    font-weight: bold;
    border: 1px solid #fff;
    border-right-color: #404040;
    border-bottom-color: #404040;
}

.task {
    display: flex;
    align-items: center;
    justify-content: center;
    width: 32px;
    height: 22px;
}

.task svg {
    width: 16px;
    height: 16px;
}

.running {
    border: 1px solid #fff;
    border-right-color: #404040;
    border-bottom-color: #404040;
}

.tray {
    display: flex;
    align-items: center;
    gap: 8px;
    height: 22px;
    margin-left: auto;
    padding: 0 3px 0 6px;
    font-family: Roboto, sans-serif;
    border: 1px solid #fff;
    border-top-color: #808080;
    border-left-color: #808080;
}

.tray time {
    margin: 0 4px 0 8px;
}
```
